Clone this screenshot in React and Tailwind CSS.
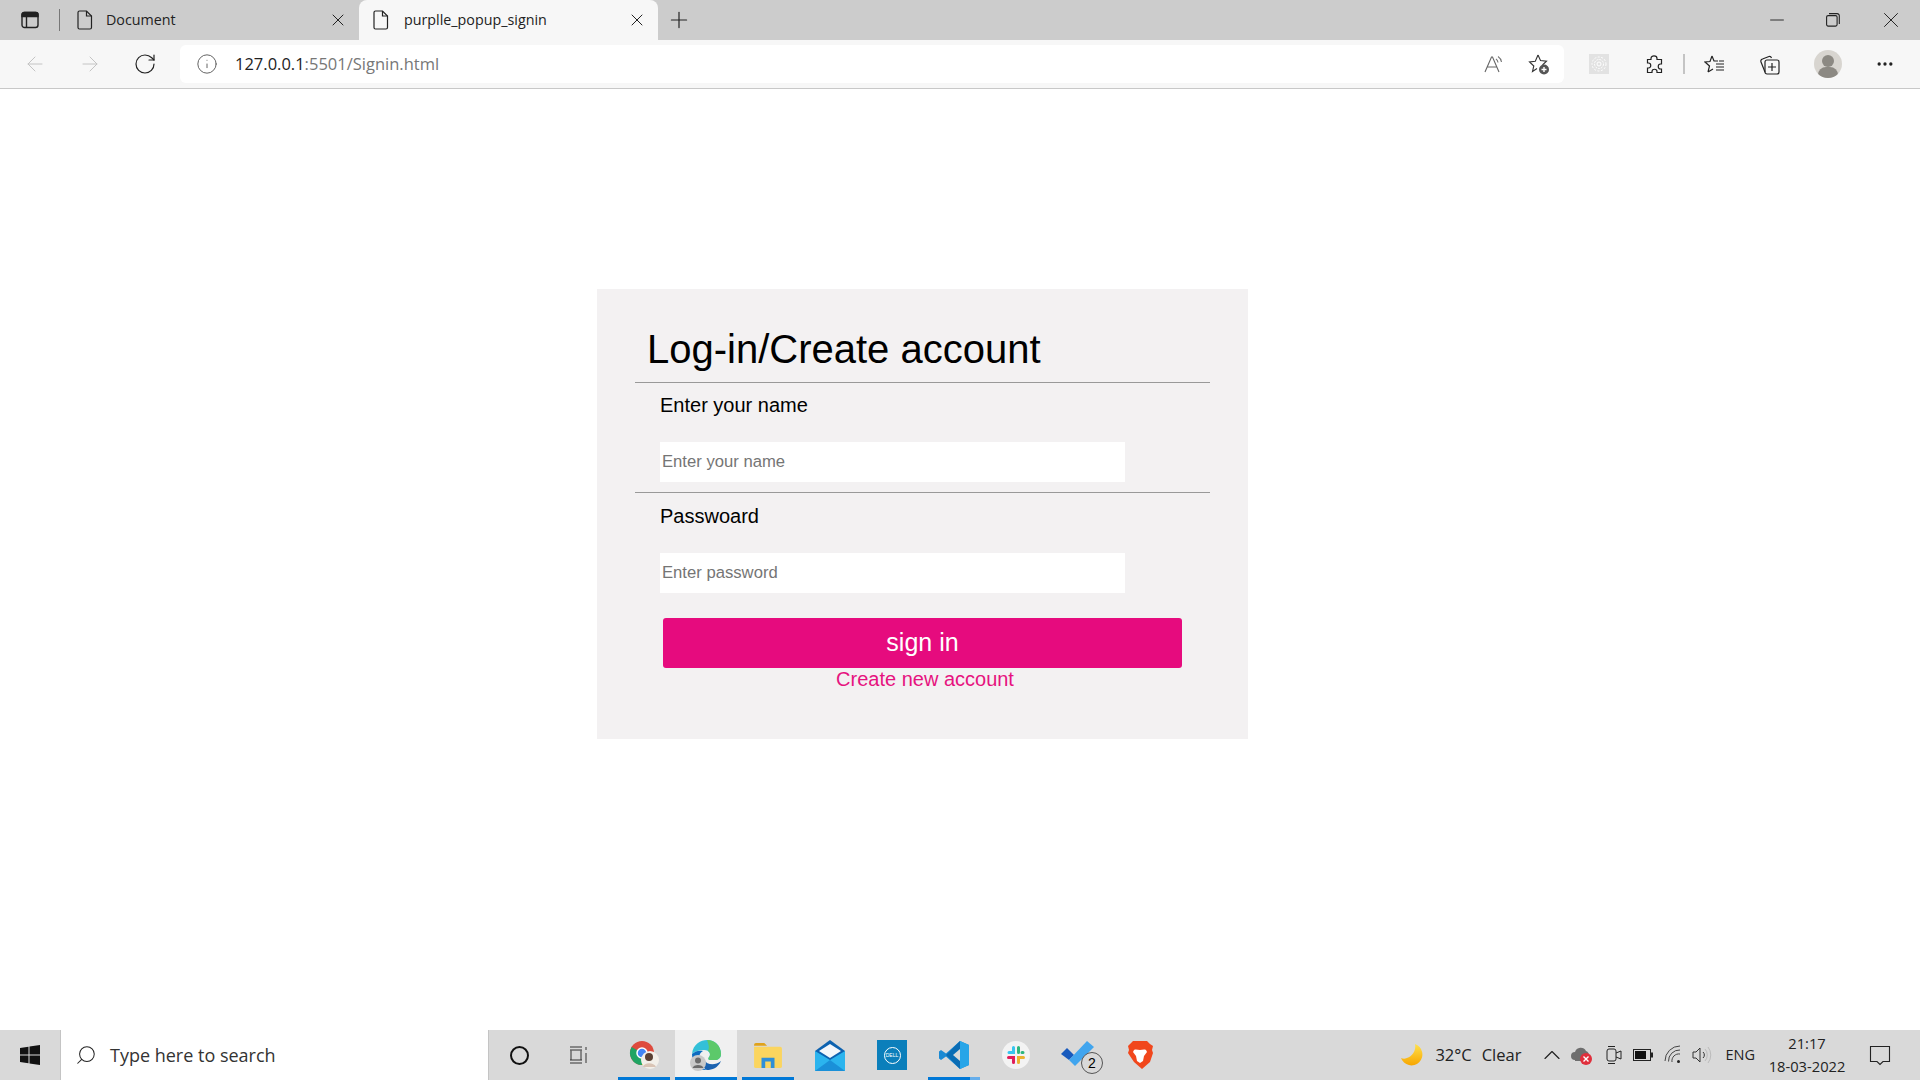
import React from 'react';
import { ArrowLeft, ArrowRight, RotateCw, Info, X, Plus, Minus, MoreHorizontal, Search, ChevronUp } from 'lucide-react';

const PageIcon = () => (
  <svg width="16" height="20" viewBox="0 0 16 20" fill="none" stroke="#222" strokeWidth="1.2">
    <path d="M2.500 1h7l5 5v11.500a1.500 1.500 0 0 1-1.500 1.500h-10.500a1.500 1.500 0 0 1-1.500-1.500v-15a1.500 1.500 0 0 1 1.500-1.500z" />
    <path d="M9.500 1v5h5" />
  </svg>
);

const TabStrip = () => (
  <div className="flex items-center h-10 bg-[#cccccc] shrink-0">
    <div className="flex items-center justify-center w-[58px] h-10 pl-[2px]">
      <svg width="18" height="18" viewBox="0 0 18 18" fill="none" stroke="#222" strokeWidth="1.4">
        <rect x="1" y="1.500" width="16" height="15" rx="2.500" />
        <path d="M1 3.500a2 2 0 0 1 2-2h12a2 2 0 0 1 2 2v2h-16z" fill="#222" />
        <path d="M5.500 6v10" />
      </svg>
    </div>
    <div className="w-px h-[22px] ml-[1px] bg-[#777]" />
    <div className="flex w-[299px] items-center h-10 pl-[17px] pr-[11px]">
      <PageIcon />
      <span className="ml-[13px] flex-1 text-[14.300px] text-[#222]">Document</span>
      <X size={20} strokeWidth={1.2} className="text-[#222]" />
    </div>
    <div className="flex items-center h-10 w-[299px] pl-[14px] pr-[11px] bg-[#f7f7f7] rounded-t-lg">
      <PageIcon />
      <span className="ml-[15px] flex-1 text-[14.300px] text-[#222]">purplle_popup_signin</span>
      <X size={20} strokeWidth={1.2} className="text-[#222]" />
    </div>
    <Plus size={26} strokeWidth={1.1} className="ml-[8px] text-[#222]" />
    <div className="flex-1" />
    <div className="flex items-center gap-[38px] pr-[16px] text-[#222]">
      <Minus size={22} strokeWidth={1} />
      <svg width="14" height="14" viewBox="0 0 14 14" fill="none" stroke="#222" strokeWidth="1.100">
        <rect x="0.600" y="2.600" width="10.500" height="10.500" rx="1.500" />
        <path d="M3 0.600h8a2.200 2.200 0 0 1 2.300 2.300v8" />
      </svg>
      <X size={26} strokeWidth={0.9} />
    </div>
  </div>
);

const Toolbar = () => (
  <div className="flex items-center h-[49px] bg-[#f7f7f7] border-b border-[#c8c8c8] shrink-0">
    <ArrowLeft size={24} strokeWidth={1} className="ml-[23px] text-[#c4c4c4]" />
    <ArrowRight size={24} strokeWidth={1} className="ml-[31px] text-[#c4c4c4]" />
    <RotateCw size={24} strokeWidth={1.2} className="ml-[31px] text-[#222]" />
    <div className="flex items-center ml-[23px] w-[1384px] h-[38px] bg-white rounded-md">
      <Info size={22} strokeWidth={1} className="ml-[16px] text-[#555]" />
      <span className="ml-[17px] text-[16.500px] text-[#222]">127.0.0.1<span className="text-[#777]">:5501/Signin.html</span></span>
      <div className="flex-1" />
      <svg width="20" height="20" viewBox="0 0 20 20" fill="none" stroke="#666" strokeWidth="1.100">
        <path d="M1 18 7.500 3h1L15 18M3.500 13h9.500" />
        <path d="M12 5a5 5 0 0 1 2 3.500M14 2.500a8 8 0 0 1 3.500 5.500" stroke="#777" />
      </svg>
      <svg className="ml-[24px] mr-[14px]" width="22" height="22" viewBox="0 0 22 22" fill="none" stroke="#333" strokeWidth="1.100">
        <path d="M10 2 12.500 7.500 18.500 8.200 14.500 12M9 15.500 4.500 18.500 5.800 13 1.500 9 7.300 8.200 10 2" />
        <circle cx="16" cy="16.500" r="5" fill="#555" stroke="none" />
        <path d="M13.500 16.500h5M16 14v5" stroke="#fff" strokeWidth="1.400" />
      </svg>
    </div>
    <div className="ml-[25px] w-5 h-5 bg-[#e2e2e2] flex items-center justify-center">
      <svg width="16" height="16" viewBox="0 0 16 16" fill="none" stroke="#ffffff" strokeWidth="1">
        <circle cx="8" cy="8" r="2" />
        <circle cx="8" cy="8" r="4.500" strokeDasharray="2 1" />
        <circle cx="8" cy="8" r="7" strokeDasharray="2 1.500" />
      </svg>
    </div>
    <svg className="ml-[35px]" width="20" height="20" viewBox="0 0 20 20" fill="none" stroke="#222" strokeWidth="1.200">
      <path d="M7 4.500C7 1 13 1 13 4.500V5.500h4.500V10h-1c-3 0-3 5 0 5h1v3.500H13v-1c0-3-5-3-5 0v1H3.500V14h1c3 0 3-5 0-5h-1V5.500H7z" />
    </svg>
    <div className="ml-[19px] w-0.5 h-5 bg-[#c4c4c4]" />
    <svg className="ml-[19px]" width="22" height="20" viewBox="0 0 22 20" fill="none" stroke="#222" strokeWidth="1.200">
      <path d="M8 2 10 7h4M4 18l1.500-6L1 8l5-.5L8 2M4 18l5-3" />
      <path d="M12 10h8M12 13h8M12 16h8M15 7h5" />
    </svg>
    <svg className="ml-[33px]" width="21" height="21" viewBox="0 0 21 21" fill="none" stroke="#222" strokeWidth="1.200">
      <rect x="6" y="6" width="14" height="14" rx="2" />
      <path d="M13 9v8M9 13h8" />
      <path d="M6 18 2 8c-.5-1.500 0-2.500 1.500-3L10 2.500c1-.3 2 .2 2.500 1.500" />
    </svg>
    <div className="ml-[34px] flex items-center justify-center w-7 h-7 rounded-full bg-[#d8d5d0] overflow-hidden relative">
      <div className="absolute top-[5px] w-3 h-3 rounded-full bg-[#8c8983]" />
      <div className="absolute top-[17px] w-5 h-4 rounded-full bg-[#8c8983]" />
    </div>
    <MoreHorizontal size={20} strokeWidth={2} className="ml-[33px] text-[#222]" />
  </div>
);

const SigninCard = () => (
  <div className="w-[651px] h-[450px] bg-[#f3f1f2] ml-[597px] mt-[200px] pt-[27px] pl-[38px] font-['Liberation_Sans',Arial,sans-serif]">
    <h1 className="pl-[12px] text-[40px] leading-[66px] h-[66px] text-black">Log-in/Create account</h1>
    <div className="w-[575px] h-px bg-[#999]" />
    <div className="pl-[25px] pt-[10px] text-[20px] leading-[24px] text-black">Enter your name</div>
    <input placeholder="Enter your name" className="block ml-[25px] mt-[25px] w-[465px] h-[40px] px-[2px] bg-white text-[16.670px] placeholder:text-[#757575] outline-none" />
    <div className="w-[575px] h-px mt-[10px] bg-[#999]" />
    <div className="pl-[25px] pt-[11px] text-[20px] leading-[24px] text-black">Passwoard</div>
    <input placeholder="Enter password" className="block ml-[25px] mt-[25px] w-[465px] h-[40px] px-[2px] bg-white text-[16.670px] placeholder:text-[#757575] outline-none" />
    <button className="block ml-[28px] mt-[25px] w-[519px] h-[50px] rounded-[3px] bg-[#e60b7e] text-white text-[25px]">sign in</button>
    <div className="-mt-px w-[580px] text-center text-[20px] leading-[24px] text-[#e6137f]">
      <a>Create new account</a>
    </div>
  </div>
);

const TaskIcon = ({ children, underline, active, split }) => (
  <div className={`relative flex items-center justify-center h-full w-[62px] ${active ? 'bg-[#f0f0f0]' : ''}`}>
    {children}
    {underline && (
      <div className={`absolute bottom-0 h-[3px] flex ${active ? 'left-0 right-0' : 'left-[5px] right-[5px]'}`}>
        <div className="flex-1 bg-[#0078d7]" />
        {split && <div className="w-[10px] bg-[#66aeeb]" />}
      </div>
    )}
  </div>
);

const Taskbar = () => (
  <div className="flex items-center h-[50px] bg-[#d9d9d9] shrink-0 font-['Open_Sans',sans-serif]">
    <div className="flex items-center justify-center w-[60px] h-full">
      <svg width="20" height="20" viewBox="0 0 20 20" fill="#111">
        <path d="M0 3 8.500 1.800v7.700H0zM9.500 1.600 20 0v9.500H9.500zM0 10.500h8.500v7.700L0 17zM9.500 10.500H20V20L9.500 18.400z" />
      </svg>
    </div>
    <div className="flex items-center w-[429px] h-full bg-white pl-[14px] border-x border-[#c4c4c4]">
      <Search size={22} strokeWidth={1.1} className="scale-x-[-1] text-[#222]" />
      <span className="ml-[13px] text-[18px] text-[#333]">Type here to search</span>
    </div>
    <div className="flex items-center justify-center w-[60px]">
      <div className="w-[19px] h-[19px] rounded-full border-[2.500px] border-[#111]" />
    </div>
    <div className="flex items-center justify-center w-[60px] mr-[4px]">
      <svg width="20" height="20" viewBox="0 0 20 20" fill="none" stroke="#333" strokeWidth="1">
        <path d="M1 2h12M1 5h12M1 18h12M1 15h12M2 5.500v9.500M12 5.500v9.500M17 2v3M17 8v10" />
      </svg>
    </div>
    <TaskIcon underline>
      <svg width="32" height="32" viewBox="0 0 32 32">
        <circle cx="14" cy="14" r="12" fill="#de4b3e" />
        <path d="M14 14 26 14A12 12 0 0 1 14 26z" fill="#f4c20d" />
        <path d="M14 14 14 26A12 12 0 0 1 3.600 8z" fill="#1fa463" />
        <circle cx="14" cy="14" r="5" fill="#4285f4" stroke="#fff" strokeWidth="1.500" />
        <circle cx="22" cy="21" r="9" fill="#f2efe9" />
        <circle cx="21" cy="18" r="4" fill="#5a4033" />
        <path d="M15 28c1-5 11-5 13 0z" fill="#d9c4b5" />
      </svg>
    </TaskIcon>
    <TaskIcon underline active>
      <svg width="34" height="34" viewBox="0 0 34 34">
        <path d="M3 16C4 6 12 2 18 2c8 0 14 6 14 14 0 4-3 6-6 6h-5c-2 0-2-2-1-3 2-2 1-7-5-7-5 0-9 1-12 4z" fill="#33c0d8" />
        <path d="M18 2c8 0 14 6 14 14 0 4-3 6-6 6h-5c-2 0-2-2-1-3 2-2 1-5-1-6 2-4 0-8-1-11z" fill="#5cc96a" />
        <path d="M3 16c3-3 7-4 11-3-6 3-6 16 4 19-8 1-15-6-15-16z" fill="#0d6cc0" />
        <path d="M15 22c3 5 11 6 17 1-3 7-9 9-14 9-3-1-5-5-3-10z" fill="#1a62b0" />
        <circle cx="9" cy="25" r="8" fill="#c9c9c9" />
        <circle cx="9" cy="22.500" r="3" fill="#6b6b6b" />
        <path d="M3.500 30c1-4 10-4 11 0z" fill="#6b6b6b" />
      </svg>
    </TaskIcon>
    <TaskIcon underline>
      <svg width="28" height="26" viewBox="0 0 30 28">
        <path d="M0 3a2 2 0 0 1 2-2h9l3 3H0z" fill="#e0a21a" />
        <path d="M0 5h28a2 2 0 0 1 2 2v19a2 2 0 0 1-2 2H2a2 2 0 0 1-2-2z" fill="#fbd55f" />
        <path d="M8 28V17h14v11h-4v-7h-6v7z" fill="#2f8fd8" />
      </svg>
    </TaskIcon>
    <TaskIcon>
      <svg width="30" height="32" viewBox="0 0 30 32">
        <path d="M0 12 15 1l15 11v20H0z" fill="#0d62b0" />
        <path d="M4 12 15 5l11 7-11 7z" fill="#f4f7fb" />
        <path d="M0 12l15 9 15-9v20H0z" fill="#2bb4ee" />
        <path d="M0 32 15 21l15 11z" fill="#1a90d8" />
      </svg>
    </TaskIcon>
    <TaskIcon>
      <div className="flex items-center justify-center w-[30px] h-[30px] bg-[#0b7fbb]">
        <div className="flex items-center justify-center w-[17px] h-[17px] rounded-full border border-white text-[5px] leading-none text-white font-['Liberation_Sans',sans-serif]">DELL</div>
      </div>
    </TaskIcon>
    <TaskIcon underline split>
      <svg width="30" height="30" viewBox="0 0 30 30">
        <path d="M21 1 30 5v20l-9 4-14-12.500L2 20 0 18.500V11.500L2 10l5 3.500z" fill="#1a8ad4" />
        <path d="M21 1v28L7 15z" fill="#0a6cb4" />
        <path d="M21 9v12l-7-6z" fill="#d9d9d9" />
        <path d="M21 1 30 5v20l-9 4z" fill="#27a5e8" />
      </svg>
    </TaskIcon>
    <TaskIcon>
      <div className="flex items-center justify-center w-7 h-7 rounded-full bg-[#f3f3f3]">
        <svg width="20" height="20" viewBox="0 0 20 20" strokeWidth="3" strokeLinecap="round">
          <path d="M7.500 2.500v5H3" stroke="#36c5f0" fill="none" />
          <path d="M12.500 2.500v5M17 7.500h-1" stroke="#2eb67d" fill="none" />
          <path d="M12.500 17.500v-5h5" stroke="#ecb22e" fill="none" />
          <path d="M2.500 12.500h5v5" stroke="#e01e5a" fill="none" />
        </svg>
      </div>
    </TaskIcon>
    <TaskIcon>
      <div className="relative w-[34px] h-[30px]">
        <svg width="34" height="26" viewBox="0 0 34 26">
          <path d="M0 14 6 8 13 15 8 20z" fill="#185abd" />
          <path d="M8 20 26 1l7 6L14 26z" fill="#41a5ee" />
        </svg>
        <div className="absolute left-[20px] top-[12px] flex items-center justify-center w-[22px] h-[22px] rounded-full border border-[#555] bg-[#d9d9d9] text-[14px] text-black font-['Liberation_Sans',sans-serif]">2</div>
      </div>
    </TaskIcon>
    <TaskIcon>
      <svg width="26" height="30" viewBox="0 0 26 30">
        <path d="M6 1h14l3 3 3 2-1 4 1 3-3 9-8 7-8-7-6-9 1-3-1-4 2-2z" fill="#f1471c" />
        <path d="M7 10c2-1 4 0 6 0s4-1 6 0l1 2-3 4-1 5-3 2-3-2-1-5-3-4z" fill="#fff" />
      </svg>
    </TaskIcon>
    <div className="flex-1" />
    <div className="flex items-center h-full text-[#222]">
      <svg width="24" height="24" viewBox="0 0 24 24">
        <defs>
          <linearGradient id="moon" x1="0" y1="0" x2="0" y2="1">
            <stop offset="0" stopColor="#ffe14d" />
            <stop offset="1" stopColor="#f7a600" />
          </linearGradient>
        </defs>
        <path d="M15 1a11 11 0 1 1-14 14c7 3 16-5 14-14z" fill="url(#moon)" />
      </svg>
      <span className="ml-[11px] text-[16.500px]">32°C</span>
      <span className="ml-[10px] text-[16.500px]">Clear</span>
      <ChevronUp size={28} strokeWidth={1} className="ml-[17px]" />
      <svg className="ml-[5px]" width="22" height="20" viewBox="0 0 22 20">
        <path d="M4 15a4 4 0 0 1 0-8 6 6 0 0 1 11-1 5 5 0 0 1 3 5l-5 5H4z" fill="#6e6e6e" />
        <circle cx="15" cy="14" r="6" fill="#e02f3c" />
        <path d="M12.500 11.500l5 5M17.500 11.500l-5 5" stroke="#fff" strokeWidth="1.400" />
      </svg>
      <svg className="ml-[13px]" width="16" height="20" viewBox="0 0 16 20" fill="none" stroke="#222" strokeWidth="1">
        <rect x="1" y="4" width="9" height="12" rx="2" />
        <path d="M10 8l5-2v8l-5-2M2 1.500h7M2 18.500h7" />
      </svg>
      <svg className="ml-[11px]" width="20" height="12" viewBox="0 0 20 12">
        <rect x="0.500" y="0.500" width="17" height="11" fill="none" stroke="#222" />
        <rect x="2" y="2" width="11" height="8" fill="#111" />
        <rect x="18" y="3.500" width="2" height="5" fill="#222" />
      </svg>
      <svg className="ml-[11px]" width="20" height="20" viewBox="0 0 20 20" fill="none" stroke="#444" strokeWidth="1">
        <path d="M1 16A15 15 0 0 1 16 1M4.500 16.500A11 11 0 0 1 16 5M8 17a7 7 0 0 1 8-8" />
        <circle cx="14.500" cy="16.500" r="1.500" fill="#222" stroke="none" />
      </svg>
      <svg className="ml-[8px]" width="20" height="18" viewBox="0 0 20 18" fill="none" stroke="#333" strokeWidth="1">
        <path d="M1 6h3l4-4v14l-4-4H1z" />
        <path d="M11 6a4 4 0 0 1 0 6" />
        <path d="M13 3a9 9 0 0 1 0 12M16 1a13 13 0 0 1 0 16" stroke="#bbb" />
      </svg>
      <span className="ml-[13px] text-[14.500px]">ENG</span>
      <div className="ml-[14px] flex flex-col items-center w-[76px] text-[14.700px] whitespace-nowrap">
        <span className="leading-[22px]">21:17</span>
        <span className="leading-[24px]">18-03-2022</span>
      </div>
      <svg className="ml-[23px] mr-[28px]" width="24" height="24" viewBox="0 0 24 24" fill="none" stroke="#222" strokeWidth="1.100">
        <path d="M2.500 3.500h19v15h-6.500l-3 3-3-3h-6.500z" />
      </svg>
    </div>
  </div>
);

export default function App() {
  return (
    <div className="flex flex-col h-screen bg-white overflow-hidden font-['Open_Sans',sans-serif]">
      <TabStrip />
      <Toolbar />
      <div className="flex-1">
        <SigninCard />
      </div>
      <Taskbar />
    </div>
  );
}
